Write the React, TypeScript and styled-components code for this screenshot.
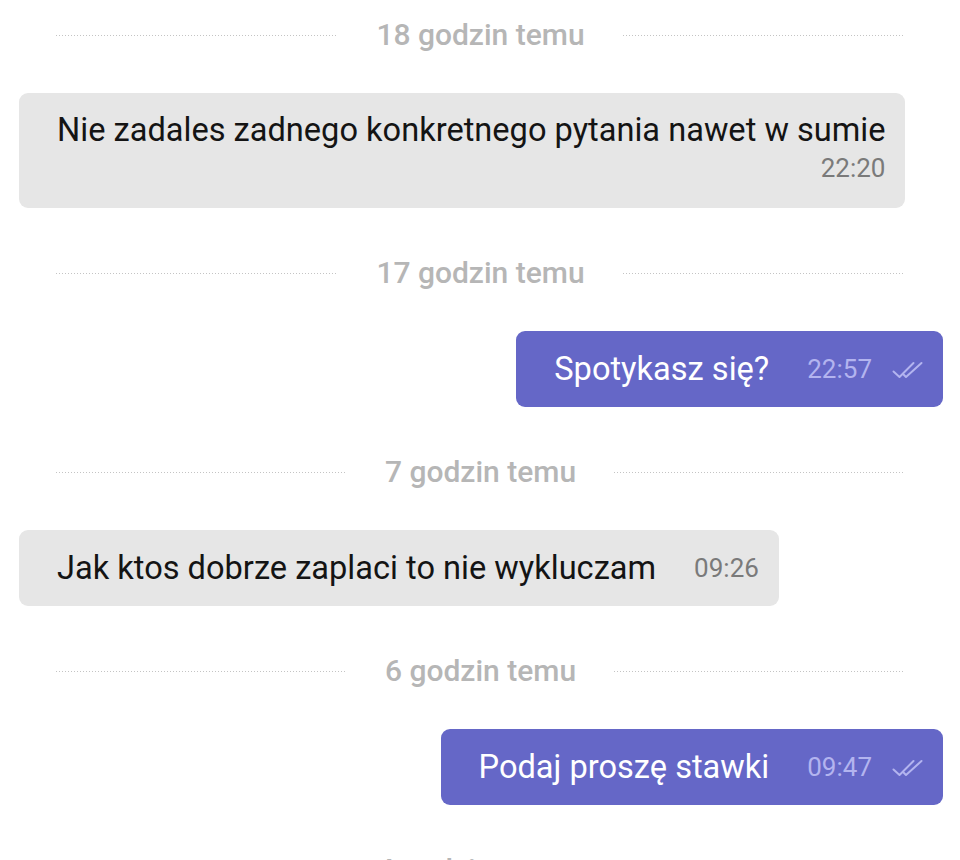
import React from "react";
import styled, { createGlobalStyle } from "styled-components";

const GlobalStyle = createGlobalStyle`
  html, body {
    margin: 0;
    padding: 0;
    background: #ffffff;
    font-family: Roboto, "Noto Sans", "Liberation Sans", sans-serif;
    -webkit-font-smoothing: antialiased;
  }
`;

const Thread = styled.div`
  display: flex;
  flex-direction: column;
  padding-top: 15px;
  width: 960px;
`;

const Divider = styled.div`
  display: flex;
  align-items: center;
  gap: 38px;
  height: 40px;
  padding: 0 55px 0 56px;
  margin-bottom: 38px;
`;

const DottedLine = styled.div`
  flex: 1;
  height: 1px;
  background-image: repeating-linear-gradient(
    to right,
    #c4c4c4 0 1px,
    transparent 1px 3px
  );
`;

const DividerLabel = styled.span`
  font-size: 30px;
  font-weight: 500;
  line-height: 40px;
  color: #b6b6b6;
  white-space: nowrap;
`;

const Row = styled.div<{ $out?: boolean }>`
  display: flex;
  justify-content: ${(p) => (p.$out ? "flex-end" : "flex-start")};
  padding: 0 17px 0 19px;
  margin-bottom: 45px;
`;

const Bubble = styled.div<{ $out?: boolean; $stacked?: boolean }>`
  display: flex;
  flex-direction: ${(p) => (p.$stacked ? "column" : "row")};
  align-items: ${(p) => (p.$stacked ? "stretch" : "center")};
  gap: ${(p) => (p.$stacked ? "0" : "38px")};
  max-width: 887px;
  box-sizing: border-box;
  padding: ${(p) => (p.$stacked ? "17px 20px 22px 38px" : "17px 20px 17px 38px")};
  border-radius: 9px;
  background: ${(p) => (p.$out ? "#6567c7" : "#e6e6e6")};
  color: ${(p) => (p.$out ? "#ffffff" : "#141414")};
`;

const MessageText = styled.span<{ $stacked?: boolean }>`
  font-size: 32.6px;
  line-height: ${(p) => (p.$stacked ? "41px" : "42px")};
  white-space: nowrap;
`;

const Meta = styled.div<{ $stacked?: boolean }>`
  display: flex;
  align-items: center;
  gap: 20px;
  align-self: ${(p) => (p.$stacked ? "flex-end" : "auto")};
`;

const Time = styled.span<{ $out?: boolean }>`
  font-size: 26px;
  line-height: 35px;
  color: ${(p) => (p.$out ? "#b3b4ef" : "#7a7a7a")};
`;

const CheckIcon = styled.svg`
  display: block;
  width: 31px;
  height: 19px;
`;

const DoubleCheck = () => (
  <CheckIcon viewBox="0 0 31 19" fill="none">
    <path
      d="M1.5 11.5 L7.5 17 L21.5 3"
      stroke="#b3b4ef"
      strokeWidth="2"
      strokeLinecap="round"
      strokeLinejoin="round"
    />
    <path
      d="M11 14 L14 17 L29.5 3"
      stroke="#b3b4ef"
      strokeWidth="2"
      strokeLinecap="round"
      strokeLinejoin="round"
    />
  </CheckIcon>
);

const DateDivider = ({ label }: { label: string }) => (
  <Divider>
    <DottedLine />
    <DividerLabel>{label}</DividerLabel>
    <DottedLine />
  </Divider>
);

type Msg = {
  kind: "msg";
  text: string;
  time: string;
  out?: boolean;
  stacked?: boolean;
};
type Sep = { kind: "sep"; label: string };

const items: (Msg | Sep)[] = [
  { kind: "sep", label: "18 godzin temu" },
  {
    kind: "msg",
    text: "Nie zadales zadnego konkretnego pytania nawet w sumie",
    time: "22:20",
    stacked: true,
  },
  { kind: "sep", label: "17 godzin temu" },
  { kind: "msg", text: "Spotykasz się?", time: "22:57", out: true },
  { kind: "sep", label: "7 godzin temu" },
  { kind: "msg", text: "Jak ktos dobrze zaplaci to nie wykluczam", time: "09:26" },
  { kind: "sep", label: "6 godzin temu" },
  { kind: "msg", text: "Podaj proszę stawki", time: "09:47", out: true },
  { kind: "sep", label: "4 godziny temu" },
];

export default function App() {
  return (
    <>
      <GlobalStyle />
      <Thread>
        {items.map((it, i) =>
          it.kind === "sep" ? (
            <DateDivider key={i} label={it.label} />
          ) : (
            <Row key={i} $out={it.out}>
              <Bubble $out={it.out} $stacked={it.stacked}>
                <MessageText $stacked={it.stacked}>{it.text}</MessageText>
                <Meta $stacked={it.stacked}>
                  <Time $out={it.out}>{it.time}</Time>
                  {it.out && <DoubleCheck />}
                </Meta>
              </Bubble>
            </Row>
          )
        )}
      </Thread>
    </>
  );
}
